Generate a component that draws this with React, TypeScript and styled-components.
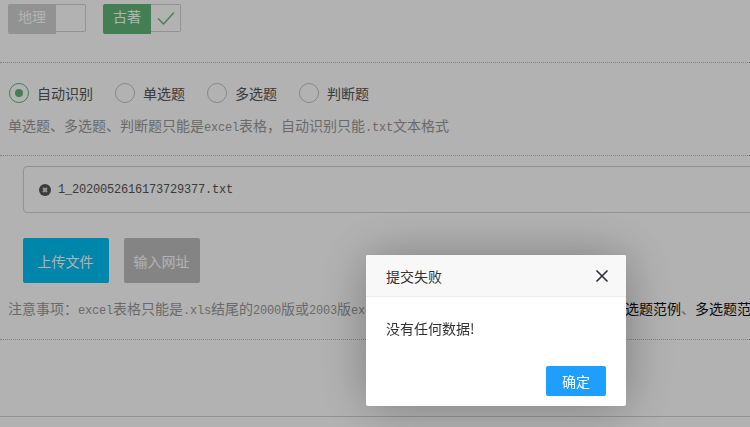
import React from 'react';
import styled, { createGlobalStyle } from 'styled-components';

const FONT = `"Liberation Mono", "Noto Sans CJK SC", monospace`;

const GlobalStyle = createGlobalStyle`
    html, body {
        margin: 0;
        padding: 0;
        width: 750px;
        height: 427px;
        overflow: hidden;
        background: #fff;
        font-family: ${FONT};
        font-size: 14px;
        color: #666;
    }
`;

const Page = styled.div`
    width: 750px;
    height: 427px;
    overflow: hidden;
`;

const SubjectRow = styled.div`
    display: flex;
    gap: 17px;
    padding: 4px 0 0 8px;
    height: 58px;
    border-bottom: 1px dotted #bbb;
`;

const Subject = styled.div`
    display: flex;
    height: 30px;
`;

const SubjectName = styled.span<{ $on?: boolean }>`
    width: 48px;
    height: 30px;
    line-height: 28px;
    text-align: center;
    border-radius: 2px 0 0 2px;
    color: #fff;
    background: ${(p) => (p.$on ? '#5fb878' : '#d2d2d2')};
`;

const SubjectTick = styled.i`
    display: flex;
    align-items: center;
    justify-content: center;
    width: 29px;
    height: 26px;
    border: 1px solid #d2d2d2;
    border-left: none;
    border-radius: 0 2px 2px 0;
`;

const TypeSection = styled.div`
    height: 92px;
    border-bottom: 1px dotted #bbb;
`;

const RadioRow = styled.div`
    display: flex;
    gap: 22px;
    padding: 20px 0 0 9px;
`;

const Radio = styled.label`
    display: flex;
    align-items: center;
    gap: 8px;
    height: 20px;
    color: #555;
`;

const RadioCircle = styled.span<{ $on?: boolean }>`
    display: flex;
    align-items: center;
    justify-content: center;
    box-sizing: border-box;
    width: 20px;
    height: 20px;
    border-radius: 50%;
    border: 1.5px solid ${(p) => (p.$on ? '#5fb878' : '#c2c2c2')};
    &::after {
        content: '';
        display: ${(p) => (p.$on ? 'block' : 'none')};
        width: 8px;
        height: 8px;
        border-radius: 50%;
        background: #5fb878;
    }
`;

const Hint = styled.div`
    margin: 14px 0 0 8px;
    height: 20px;
    line-height: 20px;
    color: #999;
    white-space: nowrap;
`;

const Latin = styled.span`
    font-size: 12px;
    letter-spacing: -0.2px;
`;

const FileBox = styled.div`
    display: flex;
    align-items: center;
    gap: 7px;
    box-sizing: border-box;
    width: 800px;
    height: 47px;
    margin: 10px 0 0 23px;
    padding: 0 0 0 15px;
    border: 1px solid #d2d2d2;
    border-radius: 4px;
    color: #555;
    font-size: 12px;
    letter-spacing: -0.2px;
`;

const ButtonRow = styled.div`
    display: flex;
    gap: 15px;
    margin: 25px 0 0 23px;
`;

const UploadButton = styled.button<{ $muted?: boolean }>`
    box-sizing: border-box;
    height: 45px;
    width: ${(p) => (p.$muted ? '76px' : '86px')};
    padding: 0 1px 0 0;
    border: none;
    border-radius: 2px;
    font-family: ${FONT};
    font-size: 14px;
    color: #fff;
    background: ${(p) => (p.$muted ? '#bebebe' : '#00bff5')};
`;

const Notes = styled.div`
    margin-top: 17px;
    padding-left: 8px;
    height: 39px;
    line-height: 20px;
    color: #999;
    white-space: nowrap;
    border-bottom: 1px dotted #bbb;
    width: 742px;
    overflow: hidden;
`;

const NotesLink = styled.a`
    color: #111;
`;

const HiddenGap = styled.span`
    display: inline-block;
    width: 239px;
`;

const BottomRule = styled.div`
    margin-top: 76px;
    border-bottom: 1px solid #d2d2d2;
`;

const Shade = styled.div`
    position: fixed;
    inset: 0;
    background: rgba(0, 0, 0, 0.3);
`;

const Dialog = styled.div`
    position: fixed;
    left: 366px;
    top: 255px;
    width: 260px;
    height: 151px;
    display: flex;
    flex-direction: column;
    background: #fff;
    border-radius: 2px;
    box-shadow: 1px 1px 50px rgba(0, 0, 0, 0.3);
    font-family: "Noto Sans CJK SC", "Liberation Sans", sans-serif;
`;

const DialogTitle = styled.div`
    display: flex;
    align-items: center;
    justify-content: space-between;
    height: 41px;
    padding: 0 17px 0 20px;
    background: #f8f8f8;
    border-bottom: 1px solid #eee;
    border-radius: 2px 2px 0 0;
    color: #333;
`;

const DialogBody = styled.div`
    flex: 1;
    padding: 19px 20px 0;
    line-height: 24px;
    color: #333;
`;

const DialogFooter = styled.div`
    display: flex;
    justify-content: flex-end;
    padding: 0 20px 10px;
`;

const ConfirmButton = styled.button`
    width: 60px;
    height: 30px;
    padding: 0;
    border: none;
    border-radius: 2px;
    background: #1e9fff;
    color: #fff;
    font-family: inherit;
    font-size: 14px;
`;

const subjects = [
    { name: '地理', on: false },
    { name: '古著', on: true },
];

const types = ['自动识别', '单选题', '多选题', '判断题'];

export default function App() {
    return (
        <Page>
            <GlobalStyle />
            <SubjectRow>
                {subjects.map((s) => (
                    <Subject key={s.name}>
                        <SubjectName $on={s.on}>{s.name}</SubjectName>
                        <SubjectTick>
                            {s.on && (
                                <svg width="20" height="16" viewBox="0 0 20 16" fill="none" stroke="#5fb878" strokeWidth="1.3">
                                    <path d="M2 8.5 L7.5 14 L18 2.5" />
                                </svg>
                            )}
                        </SubjectTick>
                    </Subject>
                ))}
            </SubjectRow>
            <TypeSection>
                <RadioRow>
                    {types.map((t, i) => (
                        <Radio key={t}>
                            <RadioCircle $on={i === 0} />
                            {t}
                        </Radio>
                    ))}
                </RadioRow>
                <Hint>
                    单选题、多选题、判断题只能是<Latin>excel</Latin>表格，自动识别只能<Latin>.txt</Latin>文本格式
                </Hint>
            </TypeSection>
            <FileBox>
                <svg width="12" height="12" viewBox="0 0 12 12">
                    <circle cx="6" cy="6" r="6" fill="#555" />
                    <path d="M4 4 L8 8 M8 4 L4 8" stroke="#ddd" strokeWidth="1.8" />
                </svg>
                1_2020052616173729377.txt
            </FileBox>
            <ButtonRow>
                <UploadButton>上传文件</UploadButton>
                <UploadButton $muted>输入网址</UploadButton>
            </ButtonRow>
            <Notes>
                注意事项：<Latin>excel</Latin>表格只能是<Latin>.xls</Latin>结尾的<Latin>2000</Latin>版或<Latin>2003</Latin>版<Latin>excel</Latin>
                <HiddenGap />
                <NotesLink>选题范例</NotesLink>、<NotesLink>多选题范例</NotesLink>
            </Notes>
            <BottomRule />
            <Shade />
            <Dialog>
                <DialogTitle>
                    提交失败
                    <svg width="14" height="14" viewBox="0 0 14 14" stroke="#2e2d3c" strokeWidth="1.6">
                        <path d="M1.5 1.5 L12.5 12.5 M12.5 1.5 L1.5 12.5" />
                    </svg>
                </DialogTitle>
                <DialogBody>没有任何数据!</DialogBody>
                <DialogFooter>
                    <ConfirmButton>确定</ConfirmButton>
                </DialogFooter>
            </Dialog>
        </Page>
    );
}
